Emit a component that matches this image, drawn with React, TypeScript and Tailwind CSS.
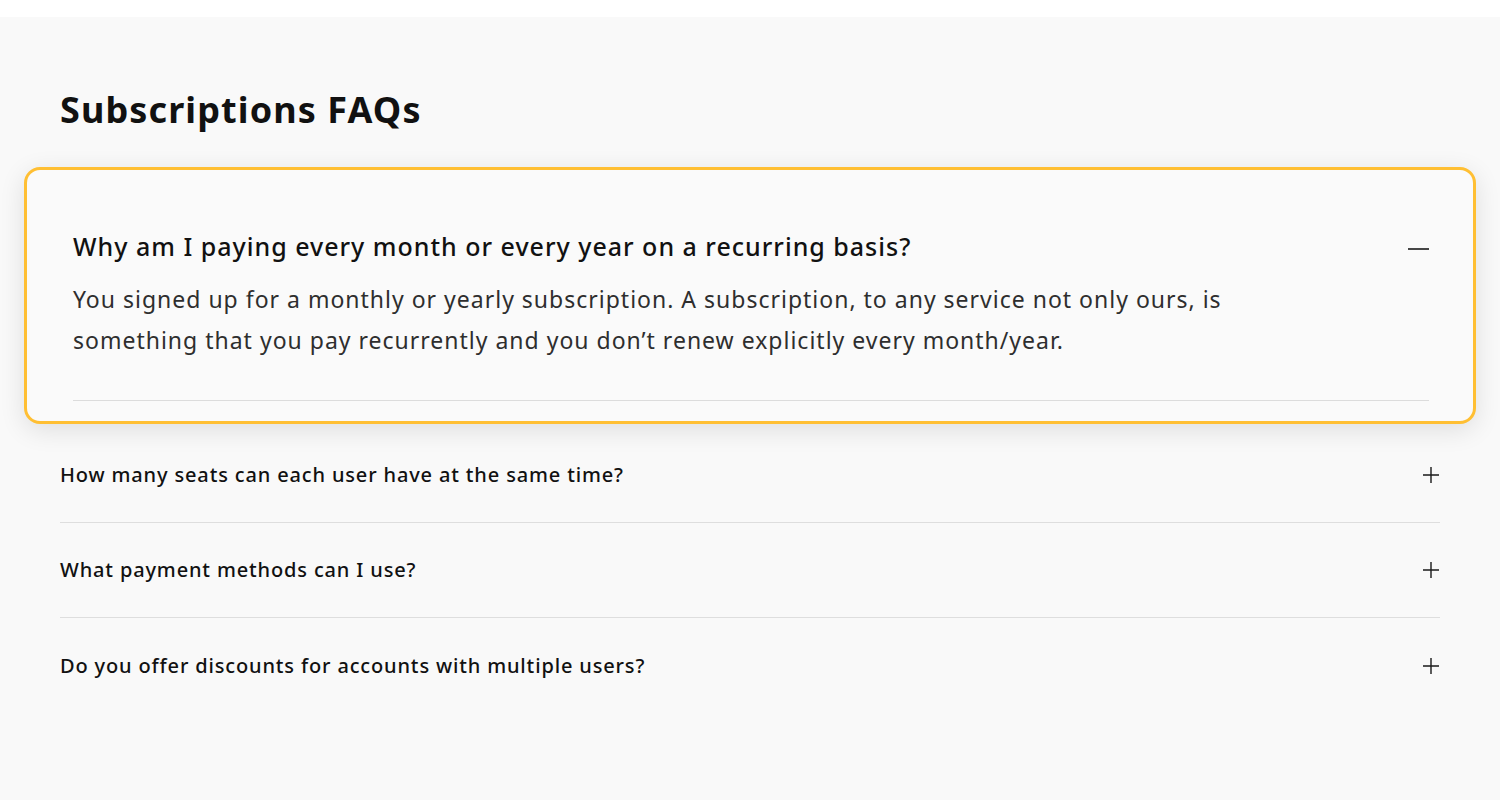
import { useState } from 'react';

const faqs = [
  {
    q: 'Why am I paying every month or every year on a recurring basis?',
    a: 'You signed up for a monthly or yearly subscription. A subscription, to any service not only ours, is something that you pay recurrently and you don’t renew explicitly every month/year.',
  },
  { q: 'How many seats can each user have at the same time?', a: '' },
  { q: 'What payment methods can I use?', a: '' },
  { q: 'Do you offer discounts for accounts with multiple users?', a: '' },
];

function Plus() {
  return (
    <svg width="18" height="18" viewBox="0 0 18 18" className="shrink-0">
      <path d="M9 1v16M1 9h16" stroke="#1a1a1a" strokeWidth="1.4" fill="none" />
    </svg>
  );
}

function Minus() {
  return (
    <svg width="21" height="4" viewBox="0 0 21 4" className="mt-[6px] shrink-0">
      <path d="M0 2h21" stroke="#1a1a1a" strokeWidth="1.6" fill="none" />
    </svg>
  );
}

export default function App() {
  const [open, setOpen] = useState(0);

  return (
    <div className="min-h-screen bg-white pt-[17px] font-['Noto_Sans',sans-serif] text-[#111]">
      <section className="min-h-[783px] bg-[#f9f9f9] px-[60px] pt-[71px]">
        <h2 className="text-[36px] leading-[44px] font-bold tracking-[1.1px]">Subscriptions FAQs</h2>

        <div className="mt-[35px]">
          {faqs.map((f, i) =>
            open === i ? (
              <div
                key={i}
                className="-mx-9 mb-[4px] rounded-[16px] border-[3px] border-[#ffbf33] bg-[#fafafa] pt-[60px] pr-[44px] pb-[20px] pl-[46px] shadow-[0_6px_26px_rgba(0,0,0,0.11)]"
              >
                <button
                  onClick={() => setOpen(-1)}
                  className="flex w-full items-center justify-between text-left"
                >
                  <span className="text-[25px] leading-[32px] font-medium tracking-[1px]">{f.q}</span>
                  <Minus />
                </button>
                <p className="mt-[17px] max-w-[1200px] text-[23px] leading-[41px] tracking-[1px] text-[#2e2e2e]">
                  {f.a}
                </p>
                <div className="mt-[39px] h-px bg-[#dcdcdc]" />
              </div>
            ) : (
              <button
                key={i}
                onClick={() => setOpen(i)}
                className={`flex h-[95px] w-full items-center justify-between text-left ${
                  i < faqs.length - 1 ? 'border-b border-[#dedede]' : ''
                }`}
              >
                <span className="text-[20px] leading-[28px] font-medium tracking-[0.85px]">{f.q}</span>
                <Plus />
              </button>
            )
          )}
        </div>
      </section>
    </div>
  );
}
